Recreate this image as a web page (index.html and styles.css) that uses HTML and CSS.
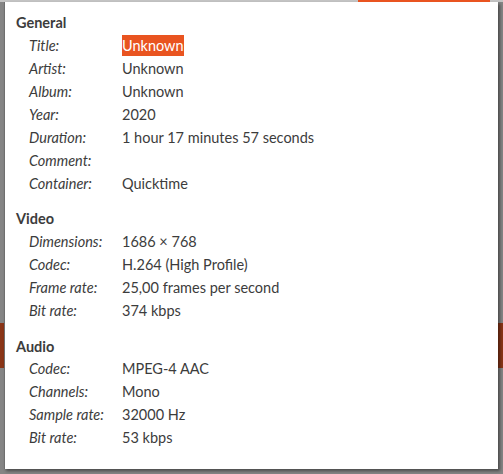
FILE: index.html
```html
<!DOCTYPE html>
<html>
<head>
<meta charset="utf-8">
<link rel="stylesheet" href="styles.css">
</head>
<body>
<div class="topline"><span class="tl-gray"></span><span class="tl-orange"></span><span class="tl-rest"></span></div>
<div class="popup">
  <section class="group">
    <h2 class="head">General</h2>
    <div class="row"><span class="label">Title:</span><span class="value"><span class="sel">Unknown</span></span></div>
    <div class="row"><span class="label">Artist:</span><span class="value">Unknown</span></div>
    <div class="row"><span class="label">Album:</span><span class="value">Unknown</span></div>
    <div class="row"><span class="label">Year:</span><span class="value">2020</span></div>
    <div class="row"><span class="label">Duration:</span><span class="value">1 hour 17 minutes 57 seconds</span></div>
    <div class="row"><span class="label">Comment:</span><span class="value"></span></div>
    <div class="row"><span class="label">Container:</span><span class="value">Quicktime</span></div>
  </section>
  <section class="group group-video">
    <h2 class="head">Video</h2>
    <div class="row"><span class="label">Dimensions:</span><span class="value">1686 × 768</span></div>
    <div class="row"><span class="label">Codec:</span><span class="value">H.264 (High Profile)</span></div>
    <div class="row"><span class="label">Frame rate:</span><span class="value">25,00 frames per second</span></div>
    <div class="row"><span class="label">Bit rate:</span><span class="value">374 kbps</span></div>
  </section>
  <section class="group group-audio">
    <h2 class="head">Audio</h2>
    <div class="row"><span class="label">Codec:</span><span class="value">MPEG-4 AAC</span></div>
    <div class="row"><span class="label">Channels:</span><span class="value">Mono</span></div>
    <div class="row"><span class="label">Sample rate:</span><span class="value">32000 Hz</span></div>
    <div class="row"><span class="label">Bit rate:</span><span class="value">53 kbps</span></div>
  </section>
</div>
</body>
</html>
```
FILE: styles.css
```css
html, body {
  margin: 0;
  padding: 0;
}
body {
  width: 503px;
  height: 474px;
  overflow: hidden;
  background:
    linear-gradient(to bottom, transparent 323px, #8a3517 323px, #8a3517 368px, transparent 368px),
    #858585;
  font-family: "Lato", "Open Sans", sans-serif;
  font-size: 14.5px;
  color: #3c3c3c;
}
.topline {
  display: flex;
  height: 2px;
  background: #c4c4c4;
}
.tl-gray { width: 358px; }
.tl-orange { width: 132px; background: #e95420; }
.tl-rest { flex: 1; }
.popup {
  box-sizing: border-box;
  margin-left: 4px;
  width: 494px;
  height: 467px;
  background: #ffffff;
  border-left: 1px solid #6f6f6f;
  box-shadow: 2px 2px 3px rgba(0,0,0,0.45);
  padding: 12px 0 0 11px;
}
.group {
  margin-bottom: 15px;
}
.group-video {
  margin-bottom: 16px;
}
.head {
  margin: 0 0 2px 0;
  font-size: 14.5px;
  font-weight: 700;
  height: 18px;
  line-height: 18px;
  color: #3c3c3c;
}
.group-audio .head {
  margin-bottom: 1px;
}
.row {
  display: flex;
  height: 23px;
  line-height: 23px;
  padding-left: 13px;
}
.label {
  width: 93px;
  font-style: italic;
}
.value .sel {
  background: #e95420;
  color: #ffffff;
  padding: 2px 0;
}
```
